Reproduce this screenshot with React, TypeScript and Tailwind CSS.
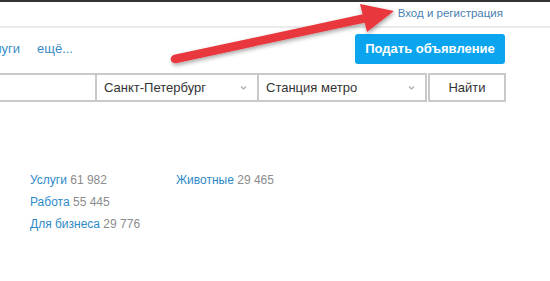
import React from 'react'

const categories = [
  [{ name: 'Услуги', count: '61 982' }, { name: 'Животные', count: '29 465' }],
  [{ name: 'Работа', count: '55 445' }],
  [{ name: 'Для бизнеса', count: '29 776' }],
]

function Chevron() {
  return (
    <svg width="9" height="6" viewBox="0 0 9 6" className="shrink-0">
      <path d="M2 1.5 L4.5 4 L7 1.5" fill="none" stroke="#a8a8a8" strokeWidth="1.1" />
    </svg>
  )
}

function Arrow() {
  // red annotation arrow drawn over the header
  return (
    <svg
      className="absolute left-0 top-0 pointer-events-none"
      width="550"
      height="80"
      viewBox="0 0 550 80"
    >
      <defs>
        <filter id="sh" x="-10%" y="-50%" width="120%" height="200%">
          <feDropShadow dx="1" dy="2" stdDeviation="2" floodColor="#000" floodOpacity="0.35" />
        </filter>
      </defs>
      <g filter="url(#sh)">
        <line x1="175" y1="59" x2="366" y2="18" stroke="#e8383d" strokeWidth="8.5" strokeLinecap="round" />
        <polygon points="394,11 360,4 367,32" fill="#e8383d" />
      </g>
    </svg>
  )
}

export default function App() {
  return (
    <div
      className="relative w-[550px] h-[281px] overflow-hidden bg-white"
      style={{ fontFamily: '"Liberation Sans", Arial, sans-serif' }}
    >
      <div className="h-[2px] bg-[#333333]" />
      <div className="h-[24px] flex items-center justify-end pr-[47px]">
        <span className="text-[11.5px] text-[#4a80b3]">Вход и регистрация</span>
      </div>
      <div className="h-[2px] bg-[#ebebeb]" />

      <div className="flex items-center justify-between pr-[45px] mt-[6px] h-[30px]">
        <div className="flex items-center gap-[17px] text-[13px] text-[#3a8cc4] ml-[-20px]">
          <span>Услуги</span>
          <span>ещё...</span>
        </div>
        <button className="h-[30px] w-[150px] rounded-[3px] bg-[#0ba5ef] text-white text-[13px] font-bold">
          Подать объявление
        </button>
      </div>

      <div className="flex mt-[9px] h-[29px] text-[13px] text-[#333]">
        <div className="w-[97px] border-y-2 border-r-2 border-[#c9c9c9]" />
        <div className="w-[162px] flex items-center justify-between pl-[7px] pr-[9px] border-y-2 border-r-2 border-[#c9c9c9]">
          <span>Санкт-Петербург</span>
          <Chevron />
        </div>
        <div className="w-[168px] flex items-center justify-between pl-[7px] pr-[9px] border-y-2 border-r-2 border-[#c9c9c9]">
          <span>Станция метро</span>
          <Chevron />
        </div>
        <div className="w-[78px] ml-[1px] flex items-center justify-center border-2 border-[#c9c9c9]">
          <span>Найти</span>
        </div>
      </div>

      <div className="mt-[70px] pl-[30px] flex flex-col gap-[6px] text-[12px]">
        {categories.map((row, i) => (
          <div key={i} className="flex h-[16px] items-center">
            {row.map((c) => (
              <div key={c.name} className="w-[146px]">
                <span className="text-[#2d8ac7]">{c.name}</span>{' '}
                <span className="text-[#8c8c8c]">{c.count}</span>
              </div>
            ))}
          </div>
        ))}
      </div>

      <Arrow />
    </div>
  )
}
